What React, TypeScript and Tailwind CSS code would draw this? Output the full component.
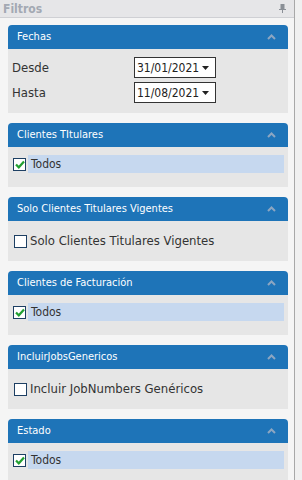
const font = { fontFamily: 'Tahoma, "DejaVu Sans Condensed", "DejaVu Sans", sans-serif' }

function Header({ title }: { title: string }) {
  return (
    <div className="h-[24px] bg-[#1e74b8] rounded-t-[4px] flex items-center justify-between pl-[9px] pr-[12px] text-white text-[11px]">
      <span>{title}</span>
      <svg width="9" height="6" viewBox="0 0 9 6">
        <path d="M1 5 L4.5 1.5 L8 5" fill="none" stroke="#8ca6c2" strokeWidth="2" />
      </svg>
    </div>
  )
}

function Check({ checked }: { checked: boolean }) {
  return (
    <span className="w-[13px] h-[13px] border border-[#1d3f63] bg-white flex items-center justify-center shrink-0">
      {checked && (
        <svg width="10" height="9" viewBox="0 0 10 9">
          <path d="M1 4.5 L3.8 7.3 L9 1.5" fill="none" stroke="#22a031" strokeWidth="2.2" />
        </svg>
      )}
    </span>
  )
}

function TodosPanel({ title }: { title: string }) {
  return (
    <div>
      <Header title={title} />
      <div className="bg-[#e6e6e6] h-[40px] pt-[8px] pl-[5px] pr-[4px]">
        <div className="flex items-center gap-[2px] h-[18px]">
          <Check checked />
          <div className="flex-1 h-[18px] bg-[#c6d8ef] flex items-center pl-[3px] text-[12px] text-[#333]">Todos</div>
        </div>
      </div>
    </div>
  )
}

function TogglePanel({ title, label }: { title: string; label: string }) {
  return (
    <div>
      <Header title={title} />
      <div className="bg-[#e6e6e6] h-[40px] pt-[13px] pl-[6px] flex items-start">
        <div className="flex items-center gap-[3px] text-[13px] text-[#333] leading-[14px]">
          <Check checked={false} />
          <span>{label}</span>
        </div>
      </div>
    </div>
  )
}

function DateBox({ value }: { value: string }) {
  return (
    <div className="w-[82px] h-[21px] border border-[#333] bg-white flex items-center justify-between pl-[2px] pr-[6px] text-[12px] text-[#222]">
      <span>{value}</span>
      <svg width="7" height="4" viewBox="0 0 7 4">
        <path d="M0 0 H7 L3.5 4 Z" fill="#222" />
      </svg>
    </div>
  )
}

export default function App() {
  return (
    <div className="w-[302px] h-[480px] flex bg-[#f0f0f0] overflow-hidden" style={font}>
      <div className="w-[295px] shrink-0 flex flex-col bg-[#f5f5f5] border-r border-[#a8a8a8]">
        {/* title bar */}
        <div className="h-[18px] shrink-0 bg-[#e6e6e8] border-b border-[#cfd0d4] flex items-center justify-between pl-[3px] pr-[8px]">
          <span className="text-[12px] font-bold text-[#a3a9b3]">Filtros</span>
          <svg width="7" height="9" viewBox="0 0 7 9">
            <path d="M1.5 0 H5.5 V5 H1.5 Z M0 5 H7 V6 H0 Z M3 6 H4 V9 H3 Z" fill="#8a8f96" />
          </svg>
        </div>

        <div className="flex flex-col gap-[10px] pl-[8px] pr-[6px] pt-[7px]">
          {/* Fechas */}
          <div>
            <Header title="Fechas" />
            <div className="bg-[#e6e6e6] h-[64px] pt-[8px] pl-[4px] flex flex-col gap-[4px] text-[13px] text-[#333]">
              <div className="flex items-center">
                <span className="w-[122px]">Desde</span>
                <DateBox value="31/01/2021" />
              </div>
              <div className="flex items-center">
                <span className="w-[122px]">Hasta</span>
                <DateBox value="11/08/2021" />
              </div>
            </div>
          </div>

          <TodosPanel title="Clientes TItulares" />
          <TogglePanel title="Solo Clientes Titulares Vigentes" label="Solo Clientes Titulares Vigentes" />
          <TodosPanel title="Clientes de Facturación" />
          <TogglePanel title="IncluirJobsGenericos" label="Incluir JobNumbers Genéricos" />
          <TodosPanel title="Estado" />
        </div>
      </div>
    </div>
  )
}
